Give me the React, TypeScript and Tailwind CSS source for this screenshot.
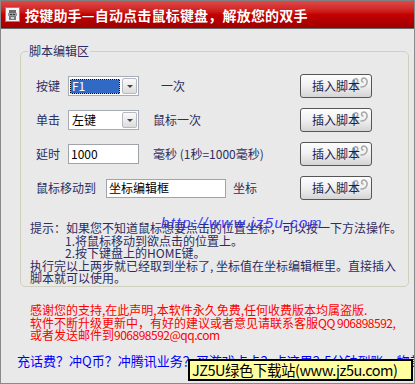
import React from "react";

const Swirl = () => (
  <svg className="absolute right-[2px] top-[1px]" width="20" height="13" viewBox="0 0 20 13" fill="none">
    <path d="M9 11 C3 11 2 4 6 3 C9 2 10 6 7 7" stroke="#a9a9a9" strokeWidth="1.6" strokeLinecap="round" />
    <path d="M12 11 C19 11 20 3 15 2 C12 2 12 6 14 6" stroke="#a9a9a9" strokeWidth="1.6" strokeLinecap="round" />
  </svg>
);

function InsertButton() {
  return (
    <div className="ml-auto relative w-[72px] h-[24px] rounded-[3px] border border-[#55555a] bg-linear-to-b from-[#fdfdfd] via-[#f0f0f0] to-[#d4d4d4] flex items-center justify-center text-[12px] leading-none text-[#1c1c4c]">
      <Swirl />
      <span className="relative">插入脚本</span>
    </div>
  );
}

function DropBtn() {
  return (
    <div className="ml-auto w-[15px] h-[16px] rounded-[2px] border border-[#b5b8c0] bg-linear-to-b from-[#fafafa] to-[#dcdcdc] flex items-center justify-center">
      <div className="w-0 h-0 border-l-[3px] border-r-[3px] border-t-[3px] border-l-transparent border-r-transparent border-t-[#444]" />
    </div>
  );
}

function Combo({ value, focused }: { value: string; focused?: boolean }) {
  return (
    <div className="w-[71px] h-[20px] border border-[#a5acb5] bg-white flex items-center px-[1px]">
      {focused ? (
        <div className="w-[50px] h-[15px] bg-[#316ac5] border border-black outline-1 outline-dotted outline-[#f5b33a] -outline-offset-1 text-white flex items-center pl-[1px] text-[12px] leading-none">
          {value}
        </div>
      ) : (
        <div className="w-[50px] h-[15px] text-black flex items-center pl-[2px] text-[12px] leading-none">{value}</div>
      )}
      <DropBtn />
    </div>
  );
}

export default function App() {
  return (
    <div className="w-[415px] h-[384px] overflow-hidden relative bg-[#e9e9e9] font-['Noto_Sans_CJK_SC',sans-serif] text-[12px] text-[#2d2d5f] border-x border-b border-[#8a8a8a]">
      {/* title bar */}
      <div className="h-[29px] border-t border-[#808080] border-b border-b-[#6a6a6a] bg-linear-to-b from-[#e04848] via-[#c40000] to-[#a00000] flex items-center pl-[4px]">
        <svg width="15" height="15" viewBox="0 0 15 15">
          <rect x="0" y="0" width="15" height="15" fill="#f4f4f4" />
          <rect x="0.5" y="0.5" width="14" height="14" fill="none" stroke="#8a8a8a" />
          <path d="M4 3 h7 v3 h-7z" fill="#6e6e6e" />
          <path d="M3 6 h9 v3 h-9z" fill="#9a9a9a" />
          <path d="M5 7 h2 v1 h-2z M8 7 h2 v1 h-2z" fill="#333" />
          <path d="M4 9 h7 v4 h-7z" fill="#7a7a7a" />
          <path d="M6 10 h3 v2 h-3z" fill="#cfcfcf" />
        </svg>
        <span className="ml-[5px] text-white font-bold text-[14px] leading-none tracking-[0.2px]">按键助手—自动点击鼠标键盘，解放您的双手</span>
      </div>

      {/* group box */}
      <fieldset className="mt-[15px] ml-[19px] w-[389px] h-[243px] border border-[#d0d0bf] rounded-[5px]">
        <legend className="ml-[7px] px-[1px] text-[12px] leading-[14px]">脚本编辑区</legend>
        <div className="flex flex-col gap-[10px] pt-[16px] pl-[15px] pr-[36px]">
          <div className="h-[24px] flex items-center">
            <span className="w-[32px]">按键</span>
            <Combo value="F1" focused />
            <span className="ml-[22px]">一次</span>
            <InsertButton />
          </div>
          <div className="h-[24px] flex items-center">
            <span className="w-[32px]">单击</span>
            <Combo value="左键" />
            <span className="ml-[14px]">鼠标一次</span>
            <InsertButton />
          </div>
          <div className="h-[24px] flex items-center">
            <span className="w-[32px]">延时</span>
            <div className="w-[71px] h-[20px] border border-[#a0a4aa] bg-white flex items-center pl-[2px] text-[12px] text-black leading-none">1000</div>
            <span className="ml-[14px]">毫秒 (1秒=1000毫秒)</span>
            <InsertButton />
          </div>
          <div className="h-[24px] flex items-center">
            <span className="w-[70px]">鼠标移动到</span>
            <div className="w-[120px] h-[19px] border border-[#a0a4aa] bg-white flex items-center pl-[2px] text-[12px] text-black leading-none">坐标编辑框</div>
            <span className="ml-[7px]">坐标</span>
            <InsertButton />
          </div>
        </div>
        <div className="mt-[22px] pl-[9px] leading-[12.5px] whitespace-nowrap">
          <div>提示：如果您不知道鼠标想要点击的位置坐标，可以按一下方法操作。</div>
          <div className="pl-[35px]">1.将鼠标移动到欲点击的位置上。</div>
          <div className="pl-[35px]">2.按下键盘上的HOME键。</div>
          <div>执行完以上两步就已经取到坐标了, 坐标值在坐标编辑框里。直接插入</div>
          <div>脚本就可以使用。</div>
        </div>
      </fieldset>

      {/* red notice */}
      <div className="mt-[17px] pl-[29px] text-[#ff0000] leading-[12.5px] whitespace-nowrap">
        <div>感谢您的支持,在此声明,本软件永久免费,任何收费版本均属盗版.</div>
        <div>
          软件不断升级更新中，有好的建议或者意见请联系客服<span className="tracking-[-0.5px]">QQ 906898592,</span>
        </div>
        <div>
          或者发送邮件到<span className="tracking-[-0.5px]">906898592@qq.com</span>
        </div>
      </div>

      <div className="mt-[11px] pl-[16px] text-[13px] leading-[16px] text-[#0000ff] whitespace-nowrap">
        充话费？冲Q币？冲腾讯业务？买游戏点卡？点这里2-5分钟到账，物美价廉
      </div>

      {/* watermark */}
      <div className="absolute left-[160px] top-[215px] text-[15px] leading-none text-[#2a2aff] italic tracking-[1.5px] font-['Liberation_Sans',sans-serif] opacity-90">
        http://www.jz5u.com
      </div>

      {/* yellow overlay */}
      <div className="absolute left-[187px] top-[359px] w-[225px] h-[22px] border-2 border-black bg-[#ffffa0] flex items-center pl-[2px] text-[14.5px] leading-none text-black whitespace-nowrap tracking-[-0.5px]">
        JZ5U绿色下载站(www.jz5u.com)
      </div>
    </div>
  );
}
